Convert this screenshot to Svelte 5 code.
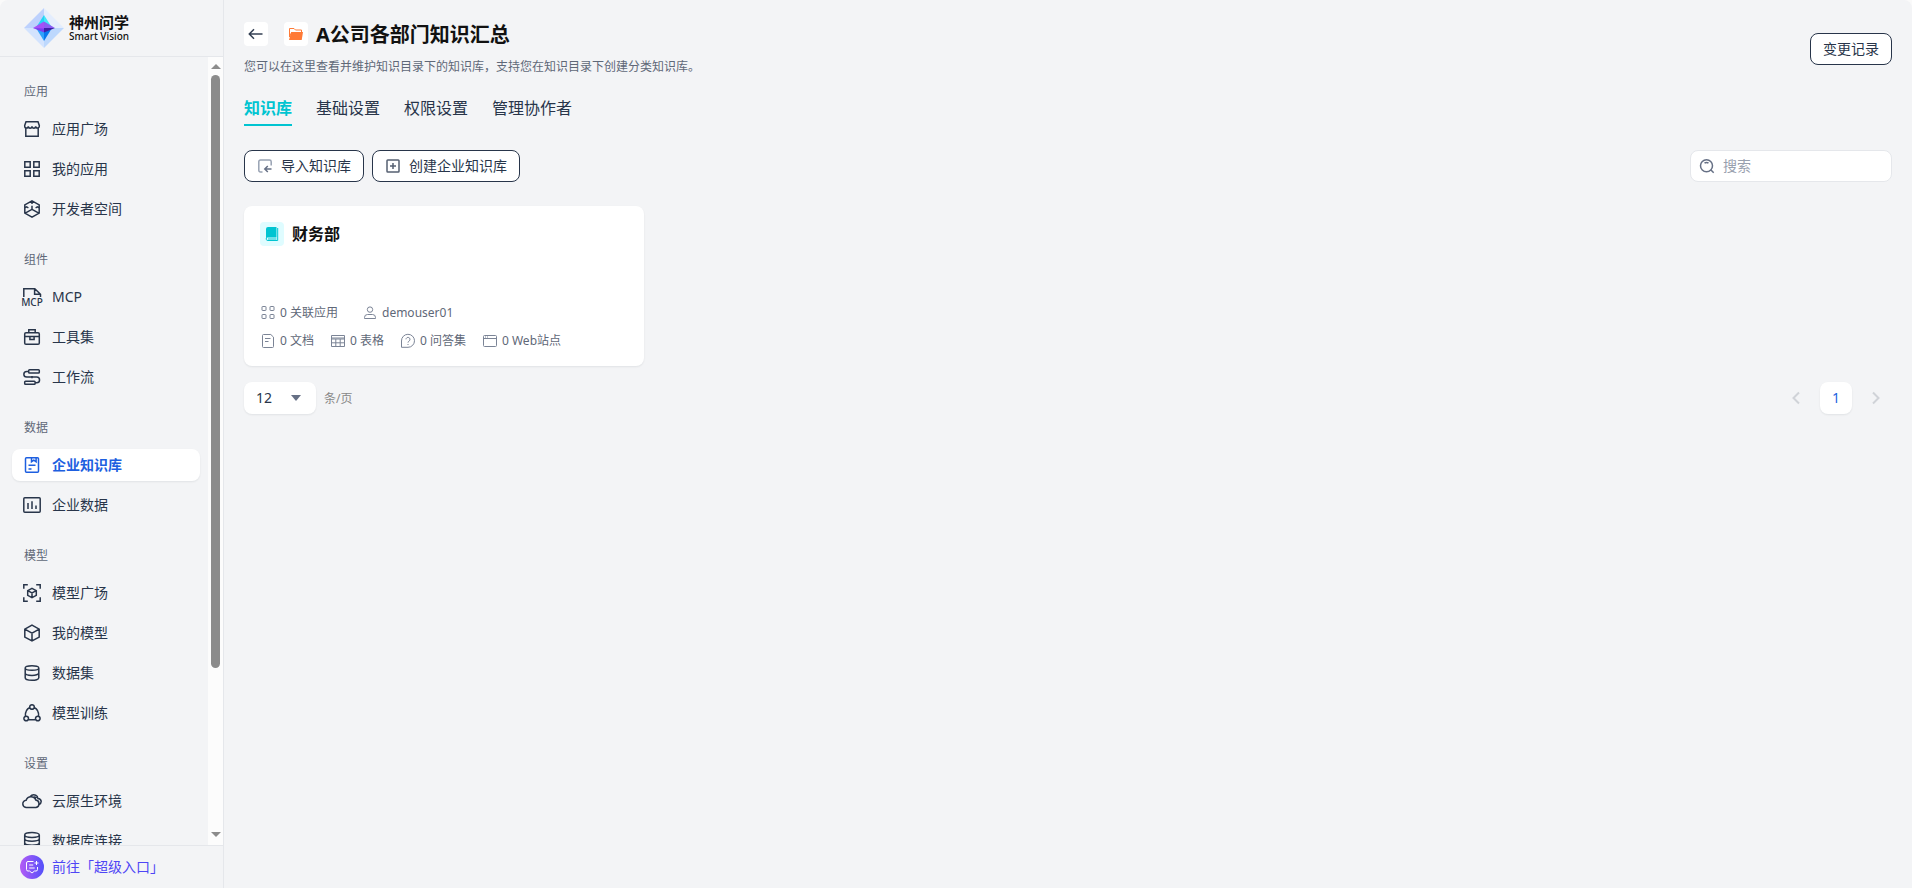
<script>
  const cube = 'M12 4.2l7.2 3.9v8L12 20l-7.2-3.9v-8zM4.8 8.1l7.2 4 7.2-4M12 12.1V20'
  const database =
    'M5.2 7c0-3 13.6-3 13.6 0s-13.6 3-13.6 0zM5.2 7v9.8c0 3.4 13.6 3.4 13.6 0V7M5.2 12c0 3.2 13.6 3.2 13.6 0'
  const databaseLink =
    'M4.7 6c0-3.200 14.600-3.200 14.600 0s-14.600 3.200-14.600 0zM4.700 6v11.500c0 3.400 14.600 3.400 14.600 0V6M4.700 9.800c0 3.200 14.600 3.200 14.600 0M4.700 13.800c0 3.200 14.600 3.200 14.600 0'

  const sections = [
    {
      title: '应用',
      items: [
        {
          label: '应用广场',
          icon: 'M6 4.800h12l1.300 3.600v.9a1.800 1.800 0 0 1-3.600 0 1.800 1.800 0 0 1-3.700 0 1.800 1.800 0 0 1-3.700 0 1.800 1.800 0 0 1-3.600 0v-.9zM5.800 11v8.300h12.400V11'
        },
        {
          label: '我的应用',
          icon: 'M4.800 4.800h5.400v5.400H4.800zM13.800 4.800h5.400v5.400h-5.400zM4.800 13.800h5.400v5.400H4.800zM13.800 13.800h5.400v5.400h-5.400z'
        },
        {
          label: '开发者空间',
          icon: 'M12 3.800l7.200 4.100v8.200L12 20.200l-7.200-4.100V7.900zM12 3.800v3.200M12 8.800v3.600l-6.800 3.800M12 12.400l6.800 3.800M4.800 10.800l1.800-1 1.800 1M19.200 10.800l-1.800-1-1.800 1'
        }
      ]
    },
    {
      title: '组件',
      items: [
        { label: 'MCP', icon: 'M3.800 12V3.700h11l5.700 5.500V12M14.600 4v5.200h5.700', text: 'MCP' },
        {
          label: '工具集',
          icon: 'M6 7.800h12q1.300 0 1.300 1.300v8.800q0 1.300-1.300 1.300H6q-1.300 0-1.300-1.300V9.100Q4.700 7.800 6 7.800zM8.800 7.500V4.800h6.400v2.700M4.700 11.600h14.600M9.900 11.600v3h4.200v-3'
        },
        {
          label: '工作流',
          icon: 'M9.500 4.700h9q.8 0 .8.8v1.800q0 .8-.8.8h-9q-.8 0-.8-.8V5.500q0-.8.8-.8zM5.500 16.300h8.800q.8 0 .8.8v1.400q0 .8-.8.8H5.500q-.8 0-.8-.8v-1.400q0-.8.8-.8zM8.500 6.400H6.700a2.800 2.800 0 0 0 0 5.700h10a2.800 2.800 0 0 1 0 5.700h-1.500M12 11v2.200'
        }
      ]
    },
    {
      title: '数据',
      items: [
        {
          label: '企业知识库',
          active: true,
          icon: 'M6.500 4.700h11q1 0 1 1v12.600q0 1-1 1h-11q-1 0-1-1V5.700q0-1 1-1zM11.500 4.700v4l2.300-1.600 2.300 1.600v-4M8.500 12.200h7M8.500 16h3'
        },
        {
          label: '企业数据',
          icon: 'M4.800 4.800h14.400q1 0 1 1v12.400q0 1-1 1H4.800q-1 0-1-1V5.800q0-1 1-1zM8 10v6M12 8.200V16M16 12.500V16'
        }
      ]
    },
    {
      title: '模型',
      items: [
        {
          label: '模型广场',
          icon: 'M3.800 7.800v-4h4M16.200 3.800h4v4M20.200 16.200v4h-4M7.800 20.200h-4v-4M12 7.400l4.300 2.300v4.700L12 16.700l-4.300-2.300V9.700zM7.700 9.700l4.300 2.300 4.300-2.300M12 12v4.700'
        },
        { label: '我的模型', icon: cube },
        { label: '数据集', icon: database },
        {
          label: '模型训练',
          icon: 'M12 3.700a2.300 2.300 0 1 1 0 4.600 2.300 2.300 0 1 1 0-4.600zM6.200 15.200a2.300 2.300 0 1 1 0 4.600 2.300 2.300 0 1 1 0-4.600zM17.800 15.200a2.300 2.300 0 1 1 0 4.600 2.300 2.300 0 1 1 0-4.600zM9.800 6.500Q5 9 5.400 15.100M14.200 6.500q4.800 2.500 4.400 8.600M8.500 18.800h7'
        }
      ]
    },
    {
      title: '设置',
      items: [
        {
          label: '云原生环境',
          icon: 'M6.700 18.400a3.600 3.600 0 0 1-.6-7.200 5.200 5.200 0 0 1 9.700-.1 3.700 3.700 0 0 1 .2 7.300zM10 7.800q2.500-3 5.700-1.600 2 1 2.200 3.200 3.200.3 3.300 3.100-.1 2.500-2.300 3.200M13.500 8.200q2-.8 3 .9'
        },
        { label: '数据库连接', icon: databaseLink }
      ]
    }
  ]

  const tabs = ['知识库', '基础设置', '权限设置', '管理协作者']

  const stats = [
    { text: '0 文档', icon: 'M3.500 1.500h7.300l2.700 2.600v9.400q0 1-1 1h-9q-1 0-1-1v-11q0-1 1-1zM5 5.500h5.500M5 8.500h3.500' },
    { text: '0 表格', icon: 'M1.500 2.500h13v11h-13zM1.500 6h13M1.500 9.800h13M5.800 6v7.500M10.200 6v7.500M1.500 5h13' },
    {
      text: '0 问答集',
      icon: 'M1.500 14.300V8A6.500 6.500 0 1 1 8 14.300zM6 6.300a2 2 0 1 1 3.400 1.500Q8 8.600 8 9.600M8 11v1'
    },
    { text: '0 Web站点', icon: 'M2.500 2.500h11q1 0 1 1v9q0 1-1 1h-11q-1 0-1-1v-9q0-1 1-1zM1.500 5.500h13M3 4h1M5 4h1' }
  ]

  const appsIcon =
    'M2.500 1.500h3q.5 0 .5.5v3q0 .5-.5.5h-3Q2 5.500 2 5V2q0-.5.5-.5zM10.500 1.500h3q.5 0 .5.5v3q0 .5-.5.5h-3Q10 5.500 10 5V2q0-.5.5-.5zM2.500 9.500h3q.5 0 .5.5v3q0 .5-.5.5h-3Q2 13.500 2 13v-3q0-.5.5-.5zM10.500 9.500h3q.5 0 .5.5v3q0 .5-.5.5h-3q-.5 0-.5-.5v-3q0-.5.5-.5z'
  const userIcon =
    'M8 1.900a2.700 2.700 0 1 1 0 5.400 2.700 2.700 0 1 1 0-5.400zM2.500 13.500V12.500q0-3 3-3h5q3 0 3 3v1z'

  let activeTab = $state('知识库')
  let keyword = $state('')
  let pageSize = $state('12')
</script>

{#snippet smallIcon(d)}
  <svg class="small-icon" viewBox="0 0 16 16" aria-hidden="true"><path {d} /></svg>
{/snippet}

<div class="app">
  <aside class="sidebar">
    <div class="brand">
      <svg class="brand-mark" viewBox="0 0 40 40" aria-hidden="true">
        <path d="M20 0L0 20h20z" fill="#bdd1fd" />
        <path d="M20 0l20 20H20z" fill="#e4edfd" />
        <path d="M0 20l20 20V20z" fill="#d3e3fe" />
        <path d="M40 20L20 40V20z" fill="#bdd8fd" />
        <path d="M20 7l-7 11h7z" fill="#22d3f7" />
        <path d="M20 7l7 11h-7z" fill="#43e5f8" />
        <path d="M12 20l8 13V20z" fill="#2fa2fb" />
        <path d="M28 20l-8 13V20z" fill="#0878ee" />
        <path d="M9 20l11-6.500V22z" fill="#a550f6" />
        <path d="M31 20l-11-6.500V20z" fill="#8b5cf4" />
        <path d="M31 20H20v4.500z" fill="#3e1fa8" />
        <path d="M9 20l11 .500v4z" fill="#7a3df0" />
      </svg>
      <div class="brand-text">
        <span class="brand-cn">神州问学</span>
        <span class="brand-en">Smart Vision</span>
      </div>
    </div>

    <div class="nav-wrap">
      <nav>
        {#each sections as section}
          <section>
            <h2>{section.title}</h2>
            <ul>
              {#each section.items as item}
                <li>
                  <a href="#{item.label}" class:active={item.active}>
                    <svg class="nav-icon" viewBox="0 0 24 24" aria-hidden="true">
                      <path d={item.icon} />
                      {#if item.text}
                        <text x="12" y="21" text-anchor="middle">{item.text}</text>
                      {/if}
                    </svg>
                    {item.label}
                  </a>
                </li>
              {/each}
            </ul>
          </section>
        {/each}
      </nav>
      <div class="scrollbar" aria-hidden="true">
        <span class="arrow up"></span>
        <div class="track"><div class="thumb"></div></div>
        <span class="arrow down"></span>
      </div>
    </div>

    <a class="portal" href="#portal">
      <span class="portal-icon">
        <svg viewBox="0 0 16 16" aria-hidden="true">
          <path d="M9.500 2.500H4q-1.500 0-1.500 1.500v6.500Q2.500 12 4 12h1.500l2.500 2 2.500-2H12q1.500 0 1.500-1.500V8M5.200 6h4M5.200 9h5.500M12.500 2v4M10.500 4h4" />
        </svg>
      </span>
      前往「超级入口」
    </a>
  </aside>

  <main>
    <header>
      <div>
        <div class="title-row">
          <button class="back" aria-label="返回">
            <svg viewBox="0 0 24 24" aria-hidden="true"><path d="M18.500 12h-13M10 7.300L5.300 12l4.700 4.700" /></svg>
          </button>
          <span class="folder">
            <svg viewBox="0 0 24 24" aria-hidden="true">
              <path d="M5.500 6.500H10l1.500 1.500h6v2.500h-10L5.500 15z" fill="#fff" stroke="#ff7a36" />
              <path d="M7.300 10H19l-1.300 8H5z" fill="#ff7a36" />
            </svg>
          </span>
          <h1>A公司各部门知识汇总</h1>
        </div>
        <p class="desc">您可以在这里查看并维护知识目录下的知识库，支持您在知识目录下创建分类知识库。</p>
      </div>
      <button class="btn">变更记录</button>
    </header>

    <div class="tabs" role="tablist">
      {#each tabs as tab}
        <button role="tab" aria-selected={tab === activeTab} class:current={tab === activeTab} onclick={() => (activeTab = tab)}>
          {tab}
        </button>
      {/each}
    </div>

    <div class="toolbar">
      <div class="actions">
        <button class="btn">
          <svg class="btn-icon light" viewBox="0 0 16 16" aria-hidden="true">
            <path d="M5.500 14H3.500Q1.800 14 1.800 12.300V3.700Q1.800 2 3.500 2h9q1.700 0 1.700 1.700V7.500" />
            <path class="strong" d="M14.500 11H8M10.800 8L7.800 11l3 3" />
          </svg>
          导入知识库
        </button>
        <button class="btn">
          <svg class="btn-icon" viewBox="0 0 16 16" aria-hidden="true">
            <path d="M2.800 2h10.400q.8 0 .8.8v10.400q0 .8-.8.8H2.800q-.8 0-.8-.8V2.800Q2 2 2.800 2zM8 5v6M5 8h6" />
          </svg>
          创建企业知识库
        </button>
      </div>
      <label class="search">
        <svg viewBox="0 0 16 16" aria-hidden="true">
          <path d="M7.500 1.700a6 6 0 1 1 0 12 6 6 0 1 1 0-12zM12 12l2.700 2.700M5.500 5q2-1.200 4 0" />
        </svg>
        <input type="text" placeholder="搜索" aria-label="搜索" bind:value={keyword} />
      </label>
    </div>

    <div class="cards">
      <article class="card">
        <div class="card-head">
          <span class="book">
            <svg viewBox="0 0 24 24" aria-hidden="true">
              <path d="M8 5h8.500v10.500H7.500Q6 15.500 6 17V7q0-2 2-2z" fill="#00c4d1" stroke="none" />
              <path d="M17.700 6v12.500H8q-1.700 0-1.700-1.200V16M8 17h8.500" />
            </svg>
          </span>
          <h3>财务部</h3>
        </div>
        <div class="meta">
          <div class="meta-row wide">
            <span class="meta-item">{@render smallIcon(appsIcon)}0 关联应用</span>
            <span class="meta-item">{@render smallIcon(userIcon)}demouser01</span>
          </div>
          <div class="meta-row">
            {#each stats as stat}
              <span class="meta-item">{@render smallIcon(stat.icon)}{stat.text}</span>
            {/each}
          </div>
        </div>
      </article>
    </div>

    <footer class="pager">
      <div class="page-size">
        <div class="select-box">
          <select id="page-size" bind:value={pageSize}>
            <option value="12">12</option>
            <option value="24">24</option>
            <option value="48">48</option>
          </select>
          <svg viewBox="0 0 10 6" aria-hidden="true"><path d="M0 0h10L5 6z" fill="#667085" /></svg>
        </div>
        <label for="page-size">条/页</label>
      </div>
      <div class="pages">
        <button class="step" aria-label="上一页" disabled>
          <svg viewBox="0 0 16 16" aria-hidden="true"><path d="M11 2.500L5.500 8l5.500 5.500" /></svg>
        </button>
        <button class="page-no">1</button>
        <button class="step" aria-label="下一页" disabled>
          <svg viewBox="0 0 16 16" aria-hidden="true"><path d="M5 2.500L10.500 8 5 13.500" /></svg>
        </button>
      </div>
    </footer>
  </main>
</div>

<style>
  :global(body) {
    margin: 0;
    background: #fafafa;
  }

  .app {
    display: flex;
    height: 100vh;
    overflow: hidden;
    border-radius: 8px 8px 0 0;
    background: #f3f4f6;
    color: #28354a;
    font-family: 'Noto Sans', 'Noto Sans CJK SC', sans-serif;
    font-size: 14px;
    line-height: 20px;
  }

  .app * {
    box-sizing: border-box;
  }

  svg {
    display: block;
    flex: none;
    fill: none;
  }

  button,
  input,
  select {
    font: inherit;
    color: inherit;
  }

  button {
    padding: 0;
    border: 0;
    background: none;
    cursor: pointer;
  }

  h1,
  h2,
  h3,
  p,
  ul {
    margin: 0;
    padding: 0;
    list-style: none;
  }

  a {
    color: inherit;
    text-decoration: none;
  }

  /* sidebar */
  .sidebar {
    display: flex;
    flex: none;
    flex-direction: column;
    width: 224px;
    border-right: 1px solid #e5e7eb;
  }

  .brand {
    display: flex;
    align-items: center;
    gap: 5px;
    height: 57px;
    flex: none;
    padding-left: 24px;
    border-bottom: 1px solid #e5e7eb;
  }

  .brand-mark {
    width: 40px;
    height: 40px;
  }

  .brand-text {
    display: flex;
    flex-direction: column;
    color: #111;
  }

  .brand-cn {
    font-size: 15px;
    font-weight: 700;
    line-height: 16px;
  }

  .brand-en {
    font-size: 10px;
    font-weight: 500;
    line-height: 12px;
  }

  .nav-wrap {
    display: flex;
    flex: 1;
    min-height: 0;
  }

  nav {
    flex: 1;
    padding: 0 8px 0 12px;
    overflow: hidden;
  }

  section {
    padding-top: 24px;
  }

  h2 {
    padding: 1px 12px 11px;
    color: #5f6878;
    font-size: 12px;
    font-weight: 400;
  }

  ul {
    display: flex;
    flex-direction: column;
    gap: 8px;
  }

  li a {
    display: flex;
    align-items: center;
    gap: 8px;
    height: 32px;
    padding: 0 8px;
    border-radius: 8px;
  }

  li a.active {
    background: #fff;
    box-shadow: 0 1px 2px rgba(16, 24, 40, 0.08);
    color: #1d5fe0;
    font-weight: 700;
  }

  .nav-icon {
    width: 24px;
    height: 24px;
    stroke: currentColor;
    stroke-width: 1.5;
  }

  .nav-icon text {
    fill: currentColor;
    stroke: none;
    font-size: 10px;
    font-weight: 500;
  }

  .scrollbar {
    display: flex;
    flex-direction: column;
    align-items: center;
    width: 15px;
    padding: 7px 0 8px;
    background: #fcfcfc;
  }

  .arrow {
    border: 5px solid transparent;
  }

  .up {
    border-top: 0;
    border-bottom-color: #8b8b8b;
  }

  .down {
    border-bottom: 0;
    border-top-color: #8b8b8b;
  }

  .track {
    flex: 1;
    width: 9px;
    padding: 6px 0;
  }

  .thumb {
    height: 79%;
    border-radius: 5px;
    background: #8b8b8b;
  }

  .portal {
    display: flex;
    flex: none;
    align-items: center;
    gap: 8px;
    height: 43px;
    padding: 0 0 1px 20px;
    border-top: 1px solid #e5e7eb;
    color: #4f46f5;
  }

  .portal-icon {
    padding: 4px;
    border-radius: 50%;
    background: linear-gradient(90deg, #b45cf5, #5350fa);
  }

  .portal-icon svg {
    width: 16px;
    height: 16px;
    stroke: #fff;
  }

  /* main */
  main {
    flex: 1;
    min-width: 0;
    padding: 20px;
    overflow: auto;
  }

  header {
    display: flex;
    align-items: center;
    justify-content: space-between;
  }

  .title-row {
    display: flex;
    align-items: center;
    height: 28px;
  }

  .back,
  .folder {
    width: 24px;
    height: 24px;
    border-radius: 4px;
    background: #fff;
  }

  .back svg {
    stroke: #344054;
    stroke-width: 1.5;
  }

  .folder {
    margin: 0 8px 0 16px;
  }

  h1 {
    padding-top: 2px;
    color: #111;
    font-size: 20px;
    font-weight: 700;
    line-height: 28px;
  }

  .desc {
    margin-top: 9px;
    color: #5f6878;
    font-size: 12px;
  }

  .btn {
    display: flex;
    align-items: center;
    gap: 8px;
    height: 32px;
    padding: 0 12px;
    border: 1px solid #28354a;
    border-radius: 8px;
    background: #fff;
  }

  .btn-icon {
    width: 16px;
    height: 16px;
    stroke: #566072;
    stroke-width: 1.5;
  }

  .btn-icon.light {
    stroke: #98a2b3;
  }

  .btn-icon .strong {
    stroke: #667085;
  }

  .tabs {
    display: flex;
    gap: 24px;
    margin-top: 19px;
  }

  .tabs button {
    padding-bottom: 4px;
    border-bottom: 2px solid transparent;
    font-size: 16px;
    line-height: 24px;
  }

  .tabs .current {
    border-color: #00c4d1;
    color: #00c4d1;
    font-weight: 700;
  }

  .toolbar {
    display: flex;
    justify-content: space-between;
    margin-top: 24px;
  }

  .actions {
    display: flex;
    gap: 8px;
  }

  .search {
    display: flex;
    align-items: center;
    gap: 8px;
    width: 202px;
    height: 32px;
    padding: 0 8px;
    border: 1px solid #e5e7eb;
    border-radius: 8px;
    background: #fff;
  }

  .search svg {
    width: 16px;
    height: 16px;
    stroke: #667085;
    stroke-width: 1.5;
  }

  .search input {
    flex: 1;
    min-width: 0;
    padding: 0;
    border: 0;
    outline: 0;
    background: none;
  }

  .search input::placeholder {
    color: #98a0ae;
  }

  .cards {
    display: grid;
    grid-template-columns: repeat(auto-fill, 400px);
    gap: 16px;
    margin-top: 24px;
  }

  .card {
    display: flex;
    flex-direction: column;
    justify-content: space-between;
    min-height: 160px;
    padding: 16px 16px 15px;
    border-radius: 8px;
    background: #fff;
    box-shadow: 0 1px 2px rgba(16, 24, 40, 0.08);
  }

  .card-head {
    display: flex;
    align-items: center;
    gap: 8px;
  }

  .book {
    width: 24px;
    height: 24px;
    border-radius: 4px;
    background: #dffcff;
  }

  .book svg {
    stroke: #00c4d1;
  }

  h3 {
    color: #111;
    font-size: 16px;
    font-weight: 700;
    line-height: 24px;
  }

  .meta {
    display: flex;
    flex-direction: column;
    gap: 8px;
    color: #5f6878;
    font-size: 12px;
  }

  .meta-row {
    display: flex;
    gap: 16px;
  }

  .meta-row.wide {
    gap: 24px;
  }

  .meta-item {
    display: flex;
    align-items: center;
    gap: 4px;
  }

  .small-icon {
    width: 16px;
    height: 16px;
    stroke: #7b8496;
  }

  .pager {
    display: flex;
    justify-content: space-between;
    margin-top: 16px;
  }

  .page-size,
  .pages {
    display: flex;
    align-items: center;
    gap: 8px;
  }

  .page-size label {
    padding-top: 2px;
    color: #888;
    font-size: 12px;
  }

  .select-box {
    position: relative;
  }

  .select-box select {
    width: 72px;
    height: 32px;
    padding: 0 12px;
    border: 0;
    border-radius: 8px;
    appearance: none;
    background: #fff;
    box-shadow: 0 1px 2px rgba(16, 24, 40, 0.08);
  }

  .select-box svg {
    position: absolute;
    top: 13px;
    right: 15px;
    width: 10px;
    height: 6px;
    pointer-events: none;
  }

  .page-no,
  .step {
    display: flex;
    align-items: center;
    justify-content: center;
    width: 32px;
    height: 32px;
  }

  .page-no {
    border-radius: 8px;
    background: #fff;
    box-shadow: 0 1px 2px rgba(16, 24, 40, 0.08);
    color: #1d5fe0;
  }

  .step svg {
    width: 16px;
    height: 16px;
    stroke: #d0d3d8;
    stroke-width: 2;
  }
</style>
